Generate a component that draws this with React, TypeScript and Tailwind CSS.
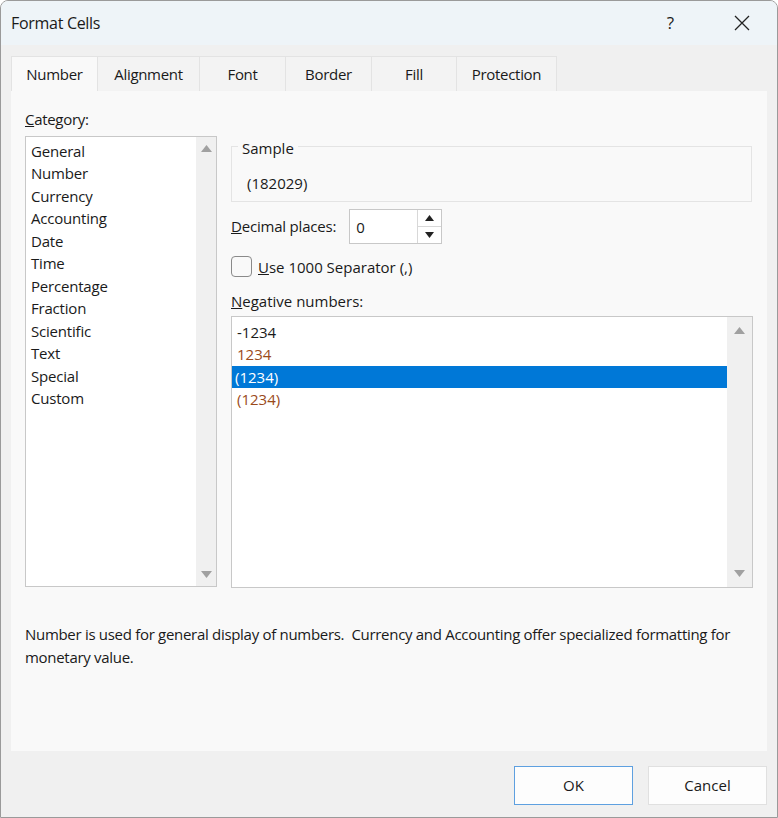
import React from "react";

const cats = ["General","Number","Currency","Accounting","Date","Time","Percentage","Fraction","Scientific","Text","Special","Custom"];
const tabs = [["Number",87],["Alignment",102],["Font",86],["Border",86],["Fill",85],["Protection",100]] as const;

function Up(){return <svg width="11" height="7" viewBox="0 0 11 7"><path d="M0 7L5.5 0L11 7Z" fill="#a0a0a0"/></svg>;}
function Down(){return <svg width="11" height="7" viewBox="0 0 11 7"><path d="M0 0L5.5 7L11 0Z" fill="#a0a0a0"/></svg>;}

export default function App(){
  return (
    <div className="w-[778px] h-[818px] bg-[#f0f0f0] border border-[#9a9a9a] rounded-t-[8px] overflow-hidden flex flex-col text-[15px] text-[#1a1a1a]" style={{fontFamily:'"Open Sans","Noto Sans",sans-serif'}}>
      <div className="h-[44px] bg-[#eef4f8] flex items-center pl-[10px] shrink-0">
        <span className="text-[16px] tracking-[-0.3px]">Format Cells</span>
        <span className="ml-auto text-[17px] mr-[60px]">?</span>
        <svg width="16" height="16" viewBox="0 0 16 16" className="mr-[27px]"><path d="M1 1L15 15M15 1L1 15" stroke="#222" strokeWidth="1.3"/></svg>
      </div>
      <div className="flex pl-[10px] mt-[11px] h-[35px]">
        {tabs.map(([t,w],i)=>(
          <div key={t} style={{width:w}} className={`flex items-center justify-center border-r border-[#e3e3e3] tracking-[-0.3px] ${i===0?"bg-[#f9f9f9] border-l border-t":"bg-[#f3f3f3] border-t"}`}>{t}</div>
        ))}
      </div>
      <div className="mx-[10px] bg-[#f9f9f9] h-[660px] px-[14px] pt-[17px] flex flex-col">
        <div className="tracking-[-0.3px]"><u>C</u>ategory:</div>
        <div className="flex gap-[14px] mt-[5px]">
          <div className="w-[192px] h-[451px] border border-[#c8c8c8] bg-white flex">
            <div className="flex-1 pt-[3px] pl-[5px] leading-[22.5px] tracking-[-0.2px]">
              {cats.map(c=><div key={c}>{c}</div>)}
            </div>
            <div className="w-[20px] bg-[#f0f0f0] flex flex-col items-center justify-between py-[8px]"><Up/><Down/></div>
          </div>
          <div className="flex-1 flex flex-col">
            <div className="h-[56px] mt-[10px] border border-[#e4e4e4] relative pl-[15px] pt-[25px] mr-[1px]">
              <span className="absolute -top-[10px] left-[6px] bg-[#f9f9f9] px-[4px]">Sample</span>
              (182029)
            </div>
            <div className="flex items-center mt-[7px]">
              <span className="tracking-[-0.2px]"><u>D</u>ecimal places:</span>
              <div className="ml-[13px] w-[93px] h-[35px] border border-[#c8c8c8] bg-white flex">
                <span className="flex-1 pl-[6px] pt-[6px]">0</span>
                <div className="w-[24px] flex flex-col border-l border-[#d8d8d8]">
                  <div className="flex-1 flex items-center justify-center border-b border-[#d8d8d8]"><svg width="9" height="6" viewBox="0 0 9 6"><path d="M0 6L4.5 0L9 6Z" fill="#222"/></svg></div>
                  <div className="flex-1 flex items-center justify-center"><svg width="9" height="6" viewBox="0 0 9 6"><path d="M0 0L4.5 6L9 0Z" fill="#222"/></svg></div>
                </div>
              </div>
            </div>
            <div className="flex items-center mt-[12px]">
              <div className="w-[21px] h-[21px] border border-[#8a8a8a] rounded-[4px] bg-[#f9f9f9]"/>
              <span className="ml-[6px]"><u>U</u>se 1000 Separator (,)</span>
            </div>
            <div className="mt-[12px]"><u>N</u>egative numbers:</div>
            <div className="mt-[3px] h-[272px] border border-[#c8c8c8] bg-white flex">
              <div className="flex-1 pt-[4px] leading-[22.5px]">
                <div className="pl-[5px]">-1234</div>
                <div className="pl-[5px] text-[#9a4a1a]">1234</div>
                <div className="pl-[3px] bg-[#0078d7] text-white">(1234)</div>
                <div className="pl-[5px] text-[#9a4a1a]">(1234)</div>
              </div>
              <div className="w-[25px] bg-[#f0f0f0] flex flex-col items-center justify-between py-[10px]"><Up/><Down/></div>
            </div>
          </div>
        </div>
        <div className="mt-[35px] leading-[23px] tracking-[-0.3px]">Number is used for general display of numbers.&nbsp; Currency and Accounting offer specialized formatting for monetary value.</div>
      </div>
      <div className="flex justify-end gap-[15px] mt-[15px] pr-[10px]">
        <div className="w-[119px] h-[39px] border border-[#5ea0e0] bg-[#fdfdfd] flex items-center justify-center">OK</div>
        <div className="w-[119px] h-[39px] border border-[#e0e0e0] bg-[#fdfdfd] flex items-center justify-center">Cancel</div>
      </div>
    </div>
  );
}
